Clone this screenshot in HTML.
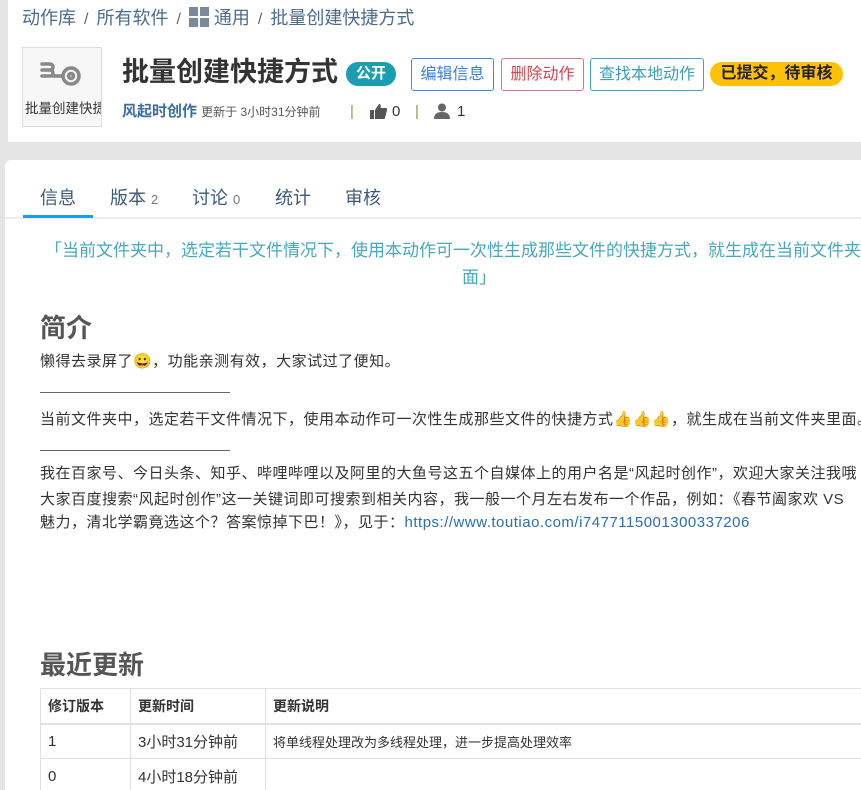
<!DOCTYPE html>
<html><head><meta charset="utf-8"><style>
*{margin:0;padding:0;box-sizing:border-box}
html,body{width:861px;height:790px;overflow:hidden}
body{background:#e4e4e4;font-family:"Liberation Sans","Noto Sans CJK SC",sans-serif;position:relative;color:#333}
.abs{position:absolute;white-space:nowrap}
.hdr{position:absolute;left:8px;top:0;width:853px;height:142px;background:#fff}
.card{position:absolute;left:5px;top:160px;width:856px;height:630px;background:#fff;border-radius:6px 0 0 0}
.bc{left:22px;top:6px;font-size:18px;color:#4d6b8c;line-height:24px}
.bc .s{color:#666;margin:0 8px;font-size:16px}
.logo{left:22px;top:47px;width:80px;height:80px;background:#f7f7f7;border:1px solid #ddd;overflow:hidden}
.title{left:122px;top:55px;font-size:27px;font-weight:bold;color:#333;line-height:34px}
.badge{left:346px;top:62px;width:50px;height:24px;border-radius:12px;background:#1a9fb0;color:#fff;font-weight:bold;font-size:15px;text-align:center;line-height:24px}
.btn{top:58px;height:33px;border:1px solid;border-radius:3px;font-size:16px;text-align:center;line-height:31px;background:#fff}
.pill{left:710px;top:62px;width:133px;height:24px;border-radius:12px;background:#ffc107;color:#222;font-weight:bold;font-size:16px;text-align:center;line-height:24px}
.tab{top:186px;font-size:18px;color:#3d5a7a;line-height:24px}
.tab small{font-size:13px;color:#777}
.q{font-size:17px;color:#45a8bd;line-height:27px}
.h2{left:40px;font-size:26px;font-weight:bold;color:#555}
.p{left:40px;font-size:15px;color:#333;line-height:24px;letter-spacing:0.5px}
.hr{left:40px;width:190px;height:1px;background:#666}
table{position:absolute;left:40px;top:688px;border-collapse:collapse;font-size:14px;width:880px}
td,th{border:1px solid #dee2e6;height:35px;padding:0 7px;text-align:left;white-space:nowrap}
th{font-weight:bold;border-bottom:2px solid #dee2e6}
</style></head><body>
<div class="hdr"></div>
<div class="abs bc">动作库<span class="s">/</span>所有软件<span class="s">/</span><svg width="20" height="20" viewBox="0 0 20 20" style="vertical-align:-3px;margin-right:5px"><rect x="0" y="0" width="9" height="9" fill="#7a8a9a"/><rect x="11" y="0" width="9" height="9" fill="#7a8a9a"/><rect x="0" y="11" width="9" height="9" fill="#7a8a9a"/><rect x="11" y="11" width="9" height="9" fill="#7a8a9a"/></svg>通用<span class="s">/</span>批量创建快捷方式</div>
<div class="abs logo"><svg width="80" height="50" viewBox="0 0 80 50"><g fill="none" stroke="#888" stroke-width="3.5" stroke-linecap="round"><path d="M19 16h8a3 3 0 0 1 0 6h-8M19 22h8a3 3 0 0 1 0 6h-8"/><circle cx="48" cy="28" r="8"/><circle cx="48" cy="28" r="2.5"/><path d="M30 28h10"/></g></svg><div style="position:absolute;top:49px;left:2px;font-size:13.5px;color:#333;white-space:nowrap">批量创建快捷</div></div>
<div class="abs title">批量创建快捷方式</div>
<div class="abs badge">公开</div>
<div class="abs btn" style="left:411px;width:83px;border-color:#3b8cf0;color:#3b7fe0">编辑信息</div>
<div class="abs btn" style="left:501px;width:83px;border-color:#e0707a;color:#d9434f">删除动作</div>
<div class="abs btn" style="left:590px;width:114px;border-color:#3aa8bd;color:#3a9fb3">查找本地动作</div>
<div class="abs pill">已提交，待审核</div>
<div class="abs" style="left:122px;top:102px;font-size:15px;font-weight:bold;color:#3a6ea5;line-height:20px">风起时创作 <span style="font-size:12px;font-weight:normal;color:#555">更新于 3小时31分钟前</span></div>
<div class="abs" style="left:350px;top:102px;font-size:15px;color:#b08850;line-height:20px">|</div>
<svg class="abs" style="left:370px;top:104px" width="17" height="15" viewBox="0 0 17 15"><rect x="0" y="6" width="4" height="9" fill="#555"/><path d="M5 6l4-6c2 0 2 2 1.5 4H16c1 0 1 1 1 2l-2 8c0 1-1 1-2 1H5z" fill="#555"/></svg>
<div class="abs" style="left:392px;top:102px;font-size:15px;color:#333;line-height:20px">0</div>
<div class="abs" style="left:415px;top:102px;font-size:15px;color:#b08850;line-height:20px">|</div>
<svg class="abs" style="left:434px;top:103px" width="16" height="16" viewBox="0 0 16 16"><circle cx="8" cy="4.5" r="4" fill="#666"/><path d="M0 16c0-5 3-7 8-7s8 2 8 7z" fill="#666"/></svg>
<div class="abs" style="left:457px;top:102px;font-size:15px;color:#333;line-height:20px">1</div>
<div class="card"></div>
<div class="abs tab" style="left:40px">信息</div>
<div class="abs tab" style="left:110px">版本 <small>2</small></div>
<div class="abs tab" style="left:192px">讨论 <small>0</small></div>
<div class="abs tab" style="left:275px">统计</div>
<div class="abs tab" style="left:345px">审核</div>
<div class="abs" style="left:5px;top:217px;width:856px;height:2px;background:#eee"></div>
<div class="abs" style="left:23px;top:215px;width:70px;height:3px;background:#1a9ff0"></div>
<div class="abs q" style="left:45px;top:237px">「当前文件夹中，选定若干文件情况下，使用本动作可一次性生成那些文件的快捷方式，就生成在当前文件夹里</div>
<div class="abs q" style="left:462px;top:264px">面」</div>
<div class="abs h2" style="top:308px">简介</div>
<div class="abs p" style="top:350px">懒得去录屏了😀，功能亲测有效，大家试过了便知。</div>
<div class="abs hr" style="top:392px"></div>
<div class="abs p" style="top:408px">当前文件夹中，选定若干文件情况下，使用本动作可一次性生成那些文件的快捷方式👍👍👍，就生成在当前文件夹里面。</div>
<div class="abs hr" style="top:450px"></div>
<div class="abs p" style="top:462px">我在百家号、今日头条、知乎、哔哩哔哩以及阿里的大鱼号这五个自媒体上的用户名是“风起时创作”，欢迎大家关注我哦</div>
<div class="abs p" style="top:488px">大家百度搜索“风起时创作”这一关键词即可搜索到相关内容，我一般一个月左右发布一个作品，例如：《春节阖家欢 VS</div>
<div class="abs p" style="top:511px">魅力，清北学霸竟选这个？答案惊掉下巴！》，见于：<span style="color:#2a6fb0">https://www.toutiao.com/i7477115001300337206</span></div>
<div class="abs h2" style="top:645px">最近更新</div>
<table>
<tr><th style="width:90px">修订版本</th><th style="width:135px">更新时间</th><th>更新说明</th></tr>
<tr><td style="font-size:15px">1</td><td style="font-size:15px">3小时31分钟前</td><td style="font-size:13px">将单线程处理改为多线程处理，进一步提高处理效率</td></tr>
<tr><td style="font-size:15px">0</td><td style="font-size:15px">4小时18分钟前</td><td></td></tr>
</table>
</body></html>
